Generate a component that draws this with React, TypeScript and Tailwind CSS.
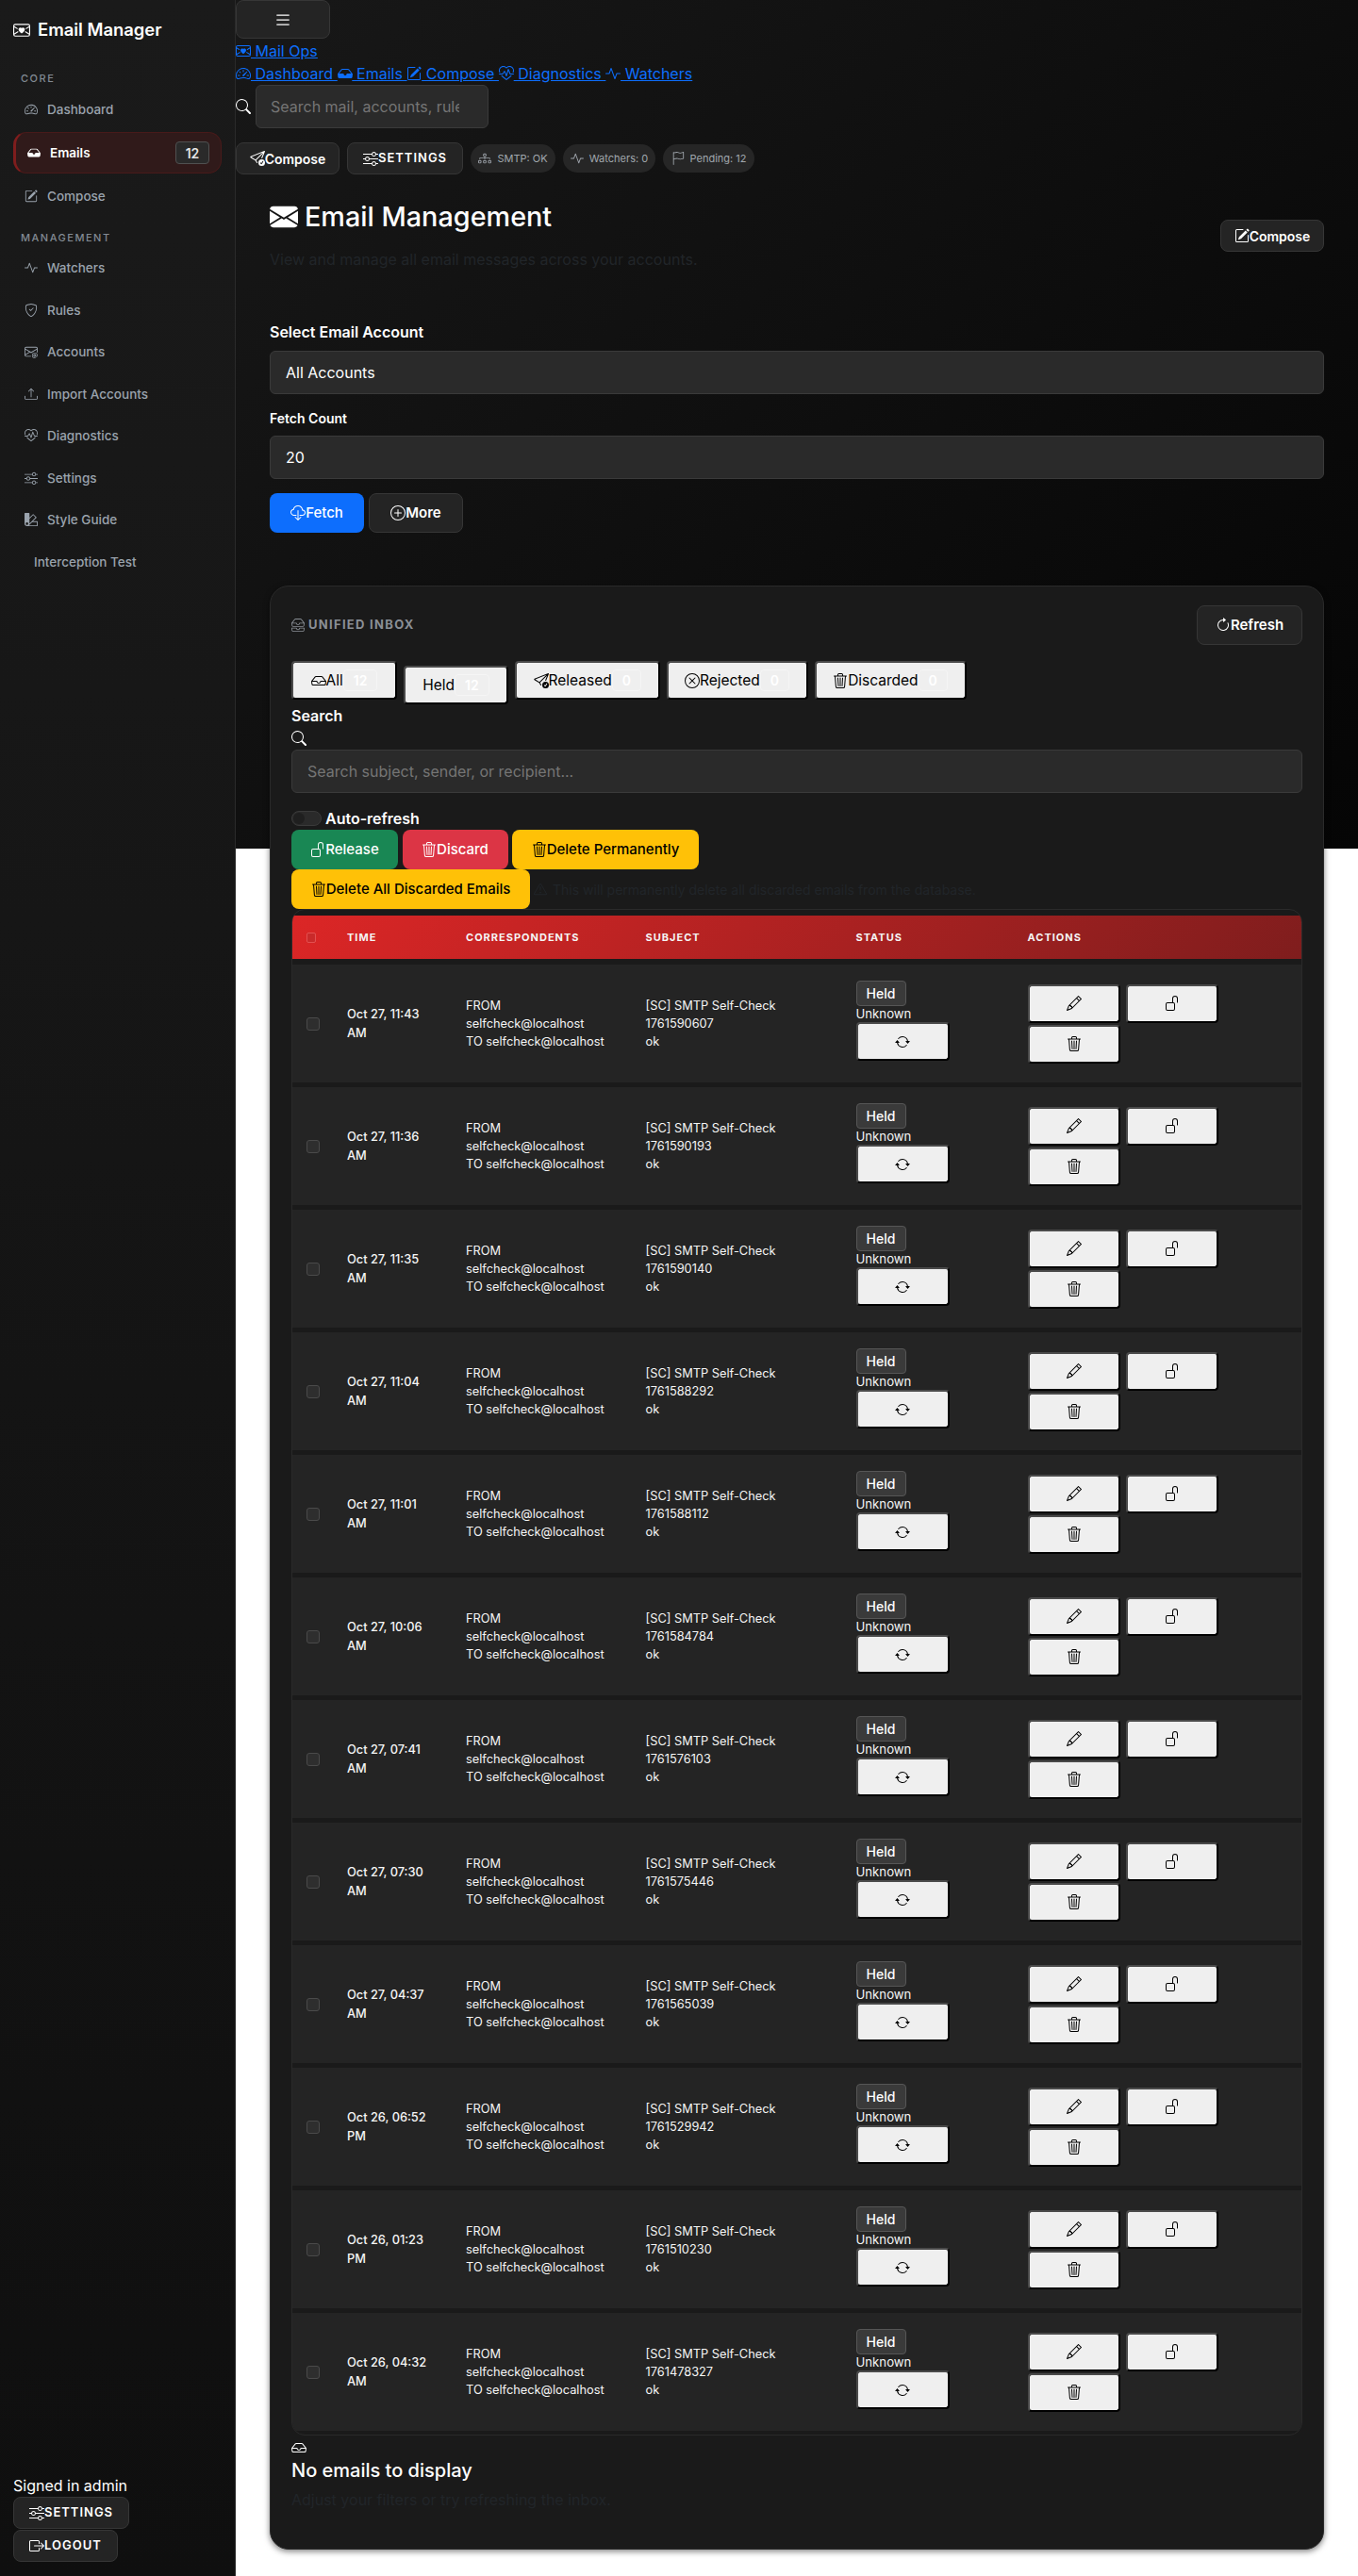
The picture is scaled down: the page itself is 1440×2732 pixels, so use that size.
import React from "react";
import {
  BsEnvelopeHeart, BsEnvelopeFill, BsSpeedometer2, BsInboxFill, BsInbox, BsInboxes, BsPencilSquare, BsActivity,
  BsShieldCheck, BsEnvelopeAt, BsUpload, BsHeartPulse, BsSliders, BsPalette2, BsSendCheck, BsDiagram3, BsFlag,
  BsCloudDownload, BsPlusCircle, BsXCircle, BsTrash3, BsArrowClockwise, BsSearch, BsUnlock, BsPencil,
  BsArrowRepeat, BsBoxArrowRight, BsList, BsExclamationTriangle,
} from "react-icons/bs";

const rows = [
  ["Oct 27, 11:43 AM", "1761590607"], ["Oct 27, 11:36 AM", "1761590193"], ["Oct 27, 11:35 AM", "1761590140"],
  ["Oct 27, 11:04 AM", "1761588292"], ["Oct 27, 11:01 AM", "1761588112"], ["Oct 27, 10:06 AM", "1761584784"],
  ["Oct 27, 07:41 AM", "1761576103"], ["Oct 27, 07:30 AM", "1761575446"], ["Oct 27, 04:37 AM", "1761565039"],
  ["Oct 26, 06:52 PM", "1761529942"], ["Oct 26, 01:23 PM", "1761510230"], ["Oct 26, 04:32 AM", "1761478327"],
];

const management: [React.ComponentType<{ className?: string }> | null, string][] = [
  [BsActivity, "Watchers"], [BsShieldCheck, "Rules"], [BsEnvelopeAt, "Accounts"], [BsUpload, "Import Accounts"],
  [BsHeartPulse, "Diagnostics"], [BsSliders, "Settings"], [BsPalette2, "Style Guide"], [null, "Interception Test"],
];

const darkBtn = "inline-flex items-center justify-center rounded-lg border border-[#363636] bg-[#242424] text-white font-semibold";
const outset = "inline-flex items-center justify-center rounded-[4px] border-2 border-t-[#4a4a4a] border-l-[#4a4a4a] border-r-black border-b-black bg-[#efefef] text-black";
const field = "block h-[46px] rounded-md border border-[#3a3a3a] bg-[#2a2a2a] text-[16px] text-white outline-none placeholder:text-[#757575]";

function NavItem({ icon: Icon, label, h }: { icon: React.ComponentType<{ className?: string }> | null; label: string; h: string }) {
  return (
    <div className={`flex items-center gap-[10px] text-[13.5px] font-medium text-[#9aa3ad] ${h} ${Icon ? "pl-3" : "pl-[22px]"}`}>
      {Icon ? <Icon className="h-[14px] w-[14px]" /> : null}
      <span>{label}</span>
    </div>
  );
}

function Sidebar() {
  return (
    <aside className="flex w-[250px] shrink-0 flex-col justify-between border-r border-[#2a2a2a] bg-gradient-to-b from-[#1a1a1a] to-[#0f0f0f] px-[14px] pb-[15px]">
      <div>
        <div className="flex h-[64px] items-center gap-2 text-[18.4px] font-semibold text-white">
          <BsEnvelopeHeart className="h-[18px] w-[18px]" />
          <span>Email Manager</span>
        </div>
        <div className="mt-[11px] h-4 pl-2 text-[11px] leading-4 font-medium tracking-[1.5px] text-[#828a93]">CORE</div>
        <div className="mt-[3px] flex flex-col gap-[2px]">
          <NavItem icon={BsSpeedometer2} label="Dashboard" h="h-11" />
          <div className="flex h-11 items-center gap-[10px] rounded-[14px] border border-l-[3px] border-[#481a1a] border-l-[#7f1d1d] bg-[#301a1a] pr-3 pl-3 text-[13.5px] font-semibold text-white">
            <BsInboxFill className="h-[14px] w-[14px]" />
            <span className="flex-1">Emails</span>
            <span className="flex h-6 w-9 items-center justify-center rounded border border-[#505050] bg-[#2a2a2a] text-[14px] text-[#e5e5e5]">12</span>
          </div>
          <NavItem icon={BsPencilSquare} label="Compose" h="h-11" />
        </div>
        <div className="mt-[14px] h-4 pl-2 text-[11px] leading-4 font-medium tracking-[1.5px] text-[#828a93]">MANAGEMENT</div>
        <div className="mt-[2px] flex flex-col">
          {management.map(([I, l]) => <NavItem key={l} icon={I} label={l} h="h-[44.5px]" />)}
        </div>
      </div>
      <div>
        <div className="text-[16px] leading-6 text-white">Signed in admin</div>
        <div className={`${darkBtn} h-[34px] w-[123px] text-[13px] tracking-[1px]`}><BsSliders className="h-4 w-4" />SETTINGS</div>
        <div className="h-[1px]" />
        <div className={`${darkBtn} h-[34px] w-[111px] text-[13px] tracking-[1px]`}><BsBoxArrowRight className="h-4 w-4" />LOGOUT</div>
      </div>
    </aside>
  );
}

function Pill({ icon: Icon, label, w }: { icon: React.ComponentType<{ className?: string }>; label: string; w: string }) {
  return (
    <span className={`inline-flex h-[30px] items-center justify-center gap-[6px] rounded-full bg-[#262626] text-[11px] text-[#a0a6ad] ${w}`}>
      <Icon className="h-[14px] w-[14px]" />
      {label}
    </span>
  );
}

function Tab({ icon: Icon, label, count, w, extra = "" }: { icon?: React.ComponentType<{ className?: string }>; label: string; count: string; w: string; extra?: string }) {
  return (
    <button className={`${outset} h-[41px] text-[15.5px] ${w} ${extra}`}>
      {Icon ? <Icon className="h-4 w-4" /> : null}
      <span>{label}</span>
      <span className="flex h-[23px] items-center justify-center rounded border border-[#f5f5f5] px-[10px] text-[14px] font-semibold text-white">{count}</span>
    </button>
  );
}

function Row({ time, id }: { time: string; id: string }) {
  return (
    <div className="grid h-[125px] grid-cols-[58px_126px_190.5px_223px_182px_1fr] items-center bg-[#242424] text-[12.8px] leading-[19.3px] text-[#f5f5f5]">
      <div className="pl-[15px]"><div className="h-[14px] w-[14px] rounded-[3px] border border-[#4a4a4a] bg-[#2e2e2e]" /></div>
      <div className="w-[96px] leading-5 font-medium">{time}</div>
      <div className="font-normal"><div>FROM</div><div>selfcheck@localhost</div><div>TO selfcheck@localhost</div></div>
      <div className="font-normal"><div>[SC] SMTP Self-Check</div><div>{id}</div><div>ok</div></div>
      <div className="mb-[6px] flex flex-col items-start">
        <span className="flex h-[27px] w-[53px] items-center justify-center rounded border border-[#565656] bg-[#3a3a3a] text-[14px] font-medium text-white">Held</span>
        <span className="text-[13.2px] leading-[17px]">Unknown</span>
        <button className={`${outset} h-[41px] w-[99px]`}><BsArrowRepeat className="h-4 w-4" /></button>
      </div>
      <div className="flex flex-wrap gap-x-[6px] gap-y-[2px]">
        <button className={`${outset} h-[41px] w-[98px]`}><BsPencil className="h-4 w-4" /></button>
        <button className={`${outset} h-[41px] w-[98px]`}><BsUnlock className="h-4 w-4" /></button>
        <button className={`${outset} h-[41px] w-[98px]`}><BsTrash3 className="h-4 w-4" /></button>
      </div>
    </div>
  );
}

export default function App() {
  return (
    <div className="flex min-h-[2732px] bg-white bg-[linear-gradient(135deg,#1a1a1a,#050505)] bg-[length:100%_900px] bg-no-repeat font-['Inter',sans-serif]">
      <Sidebar />
      <main className="min-w-0 flex-1">
        <div className={`${darkBtn} h-[41px] w-[100px] bg-[#2a2a2a] text-[16px]`}><BsList className="h-5 w-5" /></div>
        <div className="mt-[1px] text-[16px] leading-6 text-[#0d6efd] underline">
          <a><BsEnvelopeHeart className="inline h-4 w-4 align-[-2px]" /> Mail Ops</a>
        </div>
        <div className="text-[16px] leading-6 text-[#0d6efd] underline">
          <a><BsSpeedometer2 className="inline h-4 w-4 align-[-2px]" /> Dashboard </a>
          <a><BsInboxFill className="inline h-4 w-4 align-[-2px]" /> Emails </a>
          <a><BsPencilSquare className="inline h-4 w-4 align-[-2px]" /> Compose </a>
          <a><BsHeartPulse className="inline h-4 w-4 align-[-2px]" /> Diagnostics </a>
          <a><BsActivity className="inline h-4 w-4 align-[-2px]" /> Watchers</a>
        </div>
        <div className="flex items-center gap-[5px]">
          <BsSearch className="h-4 w-4 text-white" />
          <input readOnly placeholder="Search mail, accounts, rules..." className={`${field} w-[247px] pr-[30px] pl-[15px]`} />
        </div>
        <div className="mt-[15px] flex items-center gap-2">
          <div className={`${darkBtn} h-[34px] w-[110px] text-[14px]`}><BsSendCheck className="h-4 w-4" />Compose</div>
          <div className={`${darkBtn} h-[34px] w-[123px] text-[13px] tracking-[1px]`}><BsSliders className="h-4 w-4" />SETTINGS</div>
          <Pill icon={BsDiagram3} label="SMTP: OK" w="w-[90px]" />
          <Pill icon={BsActivity} label="Watchers: 0" w="w-[98px]" />
          <Pill icon={BsFlag} label="Pending: 12" w="w-[97px]" />
        </div>

        <div className="px-9 pt-7 pb-7">
          <div className="flex items-center justify-between">
            <div>
              <h1 className="flex h-[34px] items-center gap-[7px] text-[28.8px] font-medium text-white"><BsEnvelopeFill className="h-[30px] w-[30px]" />Email Management</h1>
              <p className="mt-4 text-[16px] leading-6 text-[#212529]">View and manage all email messages across your accounts.</p>
            </div>
            <div className={`${darkBtn} h-[34px] w-[110px] text-[14px]`}><BsPencilSquare className="h-4 w-4" />Compose</div>
          </div>

          <label className="mt-[53px] block text-[16px] leading-6 font-semibold text-white">Select Email Account</label>
          <div className={`${field} mt-2 flex items-center px-4`}>All Accounts</div>
          <label className="mt-4 block text-[14px] leading-5 font-semibold text-white">Fetch Count</label>
          <div className={`${field} mt-2 flex items-center px-4`}>20</div>
          <div className="mt-[15px] flex gap-[5px]">
            <div className="inline-flex h-[42px] w-[100px] items-center justify-center rounded-lg bg-[#0d6efd] text-[15px] font-medium text-white"><BsCloudDownload className="h-4 w-4" />Fetch</div>
            <div className={`${darkBtn} h-[42px] w-[100px] text-[15px] font-medium`}><BsPlusCircle className="h-4 w-4" />More</div>
          </div>

          <section className="mt-[56px] rounded-[20px] border border-[#2a2a2a] bg-[#1a1a1a] px-[22px] pt-5 pb-10 shadow-[0_2px_6px_rgba(0,0,0,0.5)]">
            <div className="flex items-center justify-between">
              <div className="flex items-center gap-[4px] text-[13px] font-bold tracking-[1.3px] text-[#8a8f96]"><BsInboxes className="h-[14px] w-[14px]" />UNIFIED INBOX</div>
              <div className={`${darkBtn} h-[42px] w-[112px] text-[15px] font-medium`}><BsArrowClockwise className="h-4 w-4" />Refresh</div>
            </div>
            <div className="mt-[17px] flex items-start gap-[7px]">
              <Tab icon={BsInbox} label="All" count="12" w="w-[112px]" />
              <Tab label="Held" count="12" w="w-[111px]" extra="mt-[5px]" />
              <Tab icon={BsSendCheck} label="Released" count="0" w="w-[153.5px]" />
              <Tab icon={BsXCircle} label="Rejected" count="0" w="w-[150px]" />
              <Tab icon={BsTrash3} label="Discarded" count="0" w="w-[161px]" />
            </div>
            <label className="block text-[16px] leading-6 font-semibold text-white">Search</label>
            <BsSearch className="mt-[4px] h-4 w-4 text-white" />
            <input readOnly placeholder="Search subject, sender, or recipient..." className={`${field} mt-[4px] w-full px-4`} />
            <div className="mt-[19px] flex h-4 items-center gap-1 text-[16px] font-semibold text-white">
              <span className="flex h-4 w-8 items-center rounded-full border border-[#3a3a3a] bg-[#2a2a2a] pl-[1px]"><span className="h-3 w-3 rounded-full bg-[#1f1f1f]" /></span>
              Auto-refresh
            </div>
            <div className="mt-1 flex gap-[4.5px]">
              <div className="inline-flex h-[42px] w-[113px] items-center justify-center rounded-lg bg-[#198754] text-[15px] font-medium text-white"><BsUnlock className="h-4 w-4" />Release</div>
              <div className="inline-flex h-[42px] w-[112px] items-center justify-center rounded-lg bg-[#dc3545] text-[15px] font-medium text-white"><BsTrash3 className="h-4 w-4" />Discard</div>
              <div className="inline-flex h-[42px] w-[198px] items-center justify-center rounded-lg bg-[#ffc107] text-[15px] font-medium text-black"><BsTrash3 className="h-4 w-4" />Delete Permanently</div>
            </div>
            <div className="flex items-center gap-1">
              <div className="inline-flex h-[42px] w-[253px] items-center justify-center rounded-lg bg-[#ffc107] text-[15px] font-medium text-black"><BsTrash3 className="h-4 w-4" />Delete All Discarded Emails</div>
              <span className="flex items-center gap-[6px] text-[14px] text-[#212529]"><BsExclamationTriangle className="h-[14px] w-[14px]" />This will permanently delete all discarded emails from the database.</span>
            </div>

            <div className="overflow-hidden rounded-[14px] border border-[#2a2a2a]">
              <div className="mt-[6px] grid h-[46px] grid-cols-[58px_126px_190.5px_223px_182px_1fr] items-center bg-[linear-gradient(135deg,#dc2626,#7f1d1d)] text-[11px] font-bold tracking-[1px] text-[#f5f5f5]">
                <div className="pl-[15px]"><div className="h-[11px] w-[10px] rounded-[2px] border border-[#e35050] bg-[#c92a2a]" /></div>
                <div>TIME</div><div>CORRESPONDENTS</div><div>SUBJECT</div><div>STATUS</div><div>ACTIONS</div>
              </div>
              <div className="mt-[6px] flex flex-col gap-[5px] pb-[4px]">
                {rows.map(([t, id]) => <Row key={id} time={t} id={id} />)}
              </div>
            </div>

            <BsInbox className="mt-[5px] h-4 w-4 text-white" />
            <div className="text-[20px] leading-8 font-medium text-white">No emails to display</div>
            <div className="mt-[3px] text-[16px] leading-6 text-[#212529]">Adjust your filters or try refreshing the inbox.</div>
          </section>
        </div>
      </main>
    </div>
  );
}
